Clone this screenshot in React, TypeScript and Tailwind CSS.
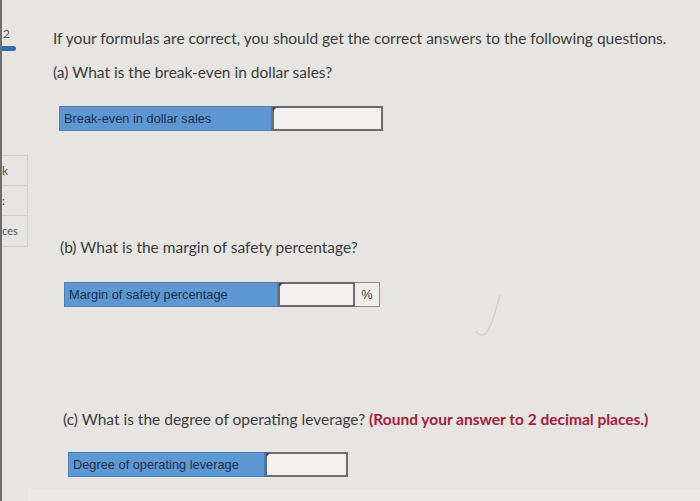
import { ReactNode } from 'react'

function AnswerRow({ label, labelW, inputW, unit }: { label: string; labelW: string; inputW: string; unit?: string }) {
  return (
    <div className="flex h-[25px] font-['Liberation_Sans',Arial,sans-serif] text-[12.8px] text-[#1f2f4a]">
      <div className={`${labelW} flex items-center px-[4px] bg-[#5e98d3] border border-[#4a7fb3]`}>{label}</div>
      <div className={`${inputW} relative bg-[#f2f1ee] border-2 border-[#6b6b70]`}>
        <span className="absolute -left-[1px] -top-[1px] w-0 h-0 border-t-[4px] border-t-[#2c4a78] border-r-[4px] border-r-transparent" />
      </div>
      {unit && (
        <div className="w-[25px] flex items-center justify-center bg-[#efeeeb] border border-[#8a8a8a] border-l-0 text-[#444]">
          {unit}
        </div>
      )}
    </div>
  )
}

function Question({ children, className }: { children: ReactNode; className?: string }) {
  return <p className={`h-[20px] leading-[20px] text-[15.5px] text-[#3b3b3d] whitespace-nowrap ${className ?? ''}`}>{children}</p>
}

export default function App() {
  return (
    <div className="w-[700px] h-[501px] flex bg-[#e7e5e1] font-['Lato','Open_Sans',sans-serif] overflow-hidden relative">
      {/* left nav strip */}
      <aside className="w-[28px] shrink-0 border-l-[2px] border-[#6e6e6e] flex flex-col text-[#555]">
        <div className="pt-[27px] pl-[1px] text-[12px] leading-[14px]">2</div>
        <div className="mt-[5px] w-[14px] h-[5px] rounded-r-full bg-[#2d6fb3]" />
        <div className="mt-[104px] border border-l-0 border-[#d3cfc9] flex flex-col">
          <div className="h-[30px] flex items-center text-[12px] border-b border-[#d3cfc9]">k</div>
          <div className="h-[30px] flex items-center text-[12px] border-b border-[#d3cfc9]">:</div>
          <div className="h-[30px] flex items-center text-[11px]">ces</div>
        </div>
      </aside>

      <main className="flex-1 flex flex-col">
        <Question className="mt-[28px] ml-[25px]">
          If your formulas are correct, you should get the correct answers to the following questions.
        </Question>
        <Question className="mt-[14px] ml-[25px]">(a) What is the break-even in dollar sales?</Question>
        <div className="mt-[24px] ml-[31px]">
          <AnswerRow label="Break-even in dollar sales" labelW="w-[213px]" inputW="w-[111px]" />
        </div>

        <Question className="mt-[106px] ml-[32px]">(b) What is the margin of safety percentage?</Question>
        <div className="mt-[25px] ml-[36px]">
          <AnswerRow label="Margin of safety percentage" labelW="w-[214px]" inputW="w-[77px]" unit="%" />
        </div>

        <Question className="mt-[102px] ml-[35px]">
          (c) What is the degree of operating leverage?{' '}
          <span className="font-bold text-[#a3213d]">(Round your answer to 2 decimal places.)</span>
        </Question>
        <div className="mt-[23px] ml-[40px]">
          <AnswerRow label="Degree of operating leverage" labelW="w-[197px]" inputW="w-[83px]" />
        </div>

        <div className="mt-auto h-[12px] bg-[#ebe9e6]" />
      </main>

      {/* faint reflection mark on the screen */}
      <svg className="absolute left-[472px] top-[293px]" width="34" height="46" viewBox="0 0 34 46" fill="none">
        <path d="M28 2 C24 14 22 30 14 40 C10 44 6 42 4 38" stroke="#d3d0cb" strokeWidth="1.2" />
      </svg>
    </div>
  )
}
